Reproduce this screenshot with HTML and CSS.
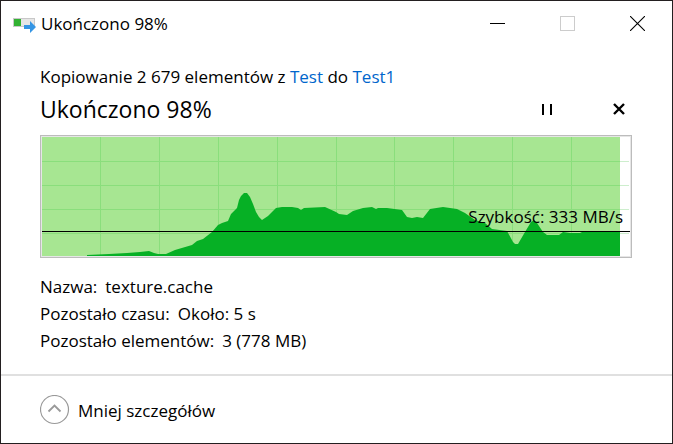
FILE: index.html
```
<!DOCTYPE html>
<html lang="pl">

<head>
    <meta charset="UTF-8">
    <meta name="viewport" content="width=device-width, initial-scale=1.0">
    <title>Ukończono 98%</title>
    <link rel="stylesheet" href="styles.css">
</head>

<body>
<div class="window">
    <!-- title bar -->
    <header class="titlebar">
        <svg class="app-icon" width="24" height="20" viewBox="0 0 24 20">
            <rect x="0.5" y="5.5" width="21" height="8" fill="#e6e6e6" stroke="#c8c8c8"/>
            <rect x="1" y="6" width="7" height="7" fill="#33b233"/>
            <path d="M11 12h6V8l6 6-6 6v-4h-6z" fill="#3595e4"/>
        </svg>
        <span class="title">Ukończono 98%</span>
        <div class="window-buttons">
            <button type="button" aria-label="Minimalizuj">
                <svg width="15" height="15"><path d="M0 7.5h15" stroke="#000"/></svg>
            </button>
            <button type="button" aria-label="Maksymalizuj" disabled>
                <svg width="15" height="15"><rect x="0.5" y="0.5" width="14" height="14" fill="none" stroke="#ccc"/></svg>
            </button>
            <button type="button" aria-label="Zamknij">
                <svg width="15" height="15"><path d="M0 0l15 15M15 0L0 15" stroke="#000" stroke-width="1.1"/></svg>
            </button>
        </div>
    </header>

    <main class="content">
        <p class="summary">Kopiowanie 2 679 elementów z <a href="#">Test</a> do <a href="#">Test1</a></p>

        <div class="progress-row">
            <h1>Ukończono 98%</h1>
            <div class="actions">
                <button type="button" aria-label="Wstrzymaj">
                    <svg width="10" height="11"><path d="M1 0v11M9 0v11" stroke="#000" stroke-width="2"/></svg>
                </button>
                <button type="button" aria-label="Anuluj">
                    <svg width="12" height="12"><path d="M1 1l10 10M11 1L1 11" stroke="#000" stroke-width="2.4"/></svg>
                </button>
            </div>
        </div>

        <!-- transfer speed -->
        <div class="chart">
            <svg viewBox="0 0 588 119" preserveAspectRatio="none">
                <path d="M0 24.5h587M0 48.5h587M0 72.5h587M0 96.5h587" stroke="#cdeecd"/>
                <rect width="578" height="119" fill="#a7e692"/>
                <path d="M58.5 0v119M117.5 0v119M176.5 0v119M235.5 0v119M294.5 0v119M352.5 0v119M411.5 0v119M470.5 0v119M529.5 0v119M0 24.5h578M0 48.5h578M0 72.5h578M0 96.5h578" stroke="#8ade7c"/>
                <path fill="#06b025" d="M45 119V118L67 117 85 116 98 115 107 114 112 116 116 117 124 117 133 113 150 108 155 104 161 102 170 95 176 88 180 86 186 84 189 77 195 71 197 63 199 59 202 56 205 56 208 60 211 67 214 75 217 80 220 83 226 79 234 71 240 70 250 70 256 71 259 73 262 71 283 70 294 75 297 77 305 78 311 74 321 71 330 70 334 72 336 71 345 71 360 73 365 80 370 81 375 80 381 81 388 72 401 70 415 72 423 76 433 83 443 86 450 92 465 94 471 105 473 107 476 107 483 95 489 85 492 83 495 86 501 95 505 98 517 98 521 95 528 96 538 96 540 95 578 95V119z"/>
                <path d="M0 94.5h588" stroke="#000"/>
            </svg>
            <span class="speed">Szybkość: 333 MB/s</span>
        </div>

        <dl class="details">
            <div><dt>Nazwa:</dt><dd>texture.cache</dd></div>
            <div><dt>Pozostało czasu:</dt><dd>Około: 5 s</dd></div>
            <div><dt>Pozostało elementów:</dt><dd>3 (778 MB)</dd></div>
        </dl>
    </main>

    <footer class="footer">
        <button type="button" class="toggle" aria-expanded="true">
            <svg width="30" height="30" viewBox="0 0 30 30" fill="none">
                <circle cx="14.5" cy="14.5" r="14" stroke="#999" stroke-width="1.2"/>
                <path d="M8.5 16.5l6-6 6 6" stroke="#999" stroke-width="1.8"/>
            </svg>
            <span>Mniej szczegółów</span>
        </button>
    </footer>
</div>
</body>

</html>
```
FILE: styles.css
```
* {
    box-sizing: border-box;
}

body {
    margin: 0;
    background-color: #fff;
    color: #000;
    font-family: "Open Sans", "Noto Sans", sans-serif;
    font-size: 17px;
    line-height: 27px;
}

button {
    display: flex;
    align-items: center;
    justify-content: center;
    padding: 0;
    border: none;
    background: none;
    color: inherit;
    font: inherit;
}

svg {
    display: block;
}

.window {
    display: flex;
    flex-direction: column;
    min-height: 100vh;
    border: 1px solid #231f20;
}

/* title bar */
.titlebar {
    display: flex;
    align-items: center;
    height: 44px;
    padding-left: 12px;
}

.app-icon {
    margin-right: 4px;
}

.window-buttons {
    display: flex;
    align-self: stretch;
    margin-left: auto;
}

.window-buttons button {
    width: 70px;
}

/* content */
.content {
    padding: 18px 40px 20px 39px;
}

.summary {
    margin: 0;
}

.summary a {
    color: #0066cc;
    text-decoration: none;
}

.progress-row {
    display: flex;
    align-items: center;
    justify-content: space-between;
    height: 38px;
    margin-bottom: 7px;
}

.progress-row h1 {
    margin: 0;
    font-size: 23px;
    font-weight: normal;
}

.actions {
    display: flex;
    gap: 46px;
}

.actions button {
    width: 26px;
    height: 26px;
}

/* chart */
.chart {
    position: relative;
    border: 1px solid #bcbcbc;
    padding: 1px;
    background-color: #fff;
    box-shadow: inset 0 0 0 1px #e6e6e6;
}

.chart svg {
    width: 100%;
    height: 119px;
}

.speed {
    position: absolute;
    right: 8px;
    bottom: 27px;
}

.details {
    margin: 15px 0 0;
}

.details div {
    display: flex;
    gap: 8px;
}

.details dd {
    margin: 0;
}

/* footer */
.footer {
    border-top: 2px solid #e0e0e0;
    padding: 19px 39px 16px;
}

.toggle {
    gap: 8px;
}
```
